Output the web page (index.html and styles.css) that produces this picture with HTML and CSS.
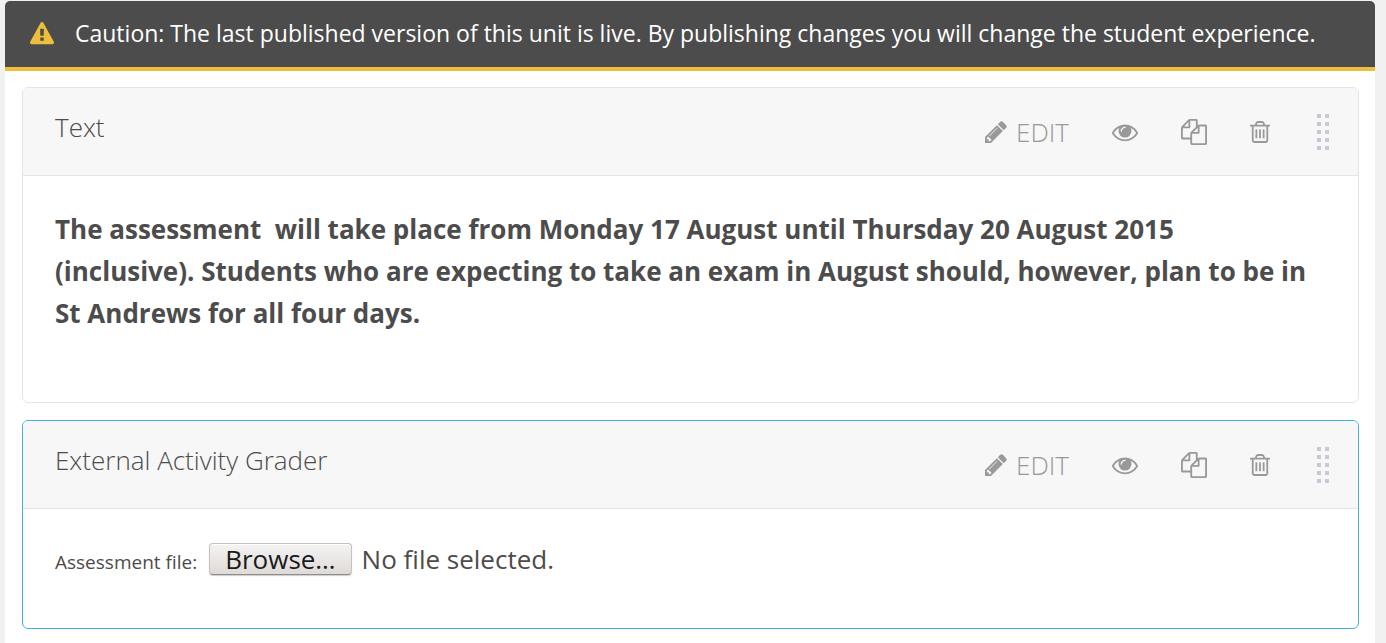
FILE: index.html
```html
<!DOCTYPE html>
<html lang="en">
<head>
<meta charset="utf-8">
<meta name="viewport" content="width=device-width, initial-scale=1">
<title>Unit editor</title>
<link rel="stylesheet" href="styles.css">
</head>
<body>
<svg class="sprite" aria-hidden="true">
  <symbol id="warning" viewBox="0 0 1792 1792"><path d="M1024 1375v-190q0-14-9.5-23.5t-22.5-9.5h-192q-13 0-22.5 9.5t-9.5 23.5v190q0 14 9.5 23.5t22.5 9.5h192q13 0 22.5-9.5t9.5-23.5zm-2-374l18-459q0-12-10-19-13-11-24-11h-220q-11 0-24 11-10 7-10 21l17 457q0 10 10 16.5t24 6.500h185q14 0 23.500-6.500t10.500-16.500zm-14-934l768 1408q35 63-2 126-17 29-46.500 46t-63.500 17h-1536q-34 0-63.500-17t-46.500-46q-37-63-2-126l768-1408q17-31 47-49t65-18 65 18 47 49z"/></symbol>
  <symbol id="pencil" viewBox="128 128 1536 1536"><path d="M491 1536l91-91-235-235-91 91v107h128v128h107zm523-928q0-22-22-22-10 0-17 7l-542 542q-7 7-7 17 0 22 22 22 10 0 17-7l542-542q7-7 7-17zm-54-192l416 416-832 832h-416v-416zm683 96q0 53-37 90l-166 166-416-416 166-165q36-38 90-38 53 0 91 38l235 234q37 39 37 91z"/></symbol>
  <symbol id="eye" viewBox="0 0 1792 1792"><path d="M1664 960q-152-236-381-353 61 104 61 225 0 185-131.500 316.500t-316.500 131.500-316.500-131.500-131.500-316.500q0-121 61-225-229 117-381 353 133 205 333.500 326.500t434.500 121.500 434.500-121.500 333.500-326.500zm-720-384q0-20-14-34t-34-14q-125 0-214.500 89.500t-89.500 214.500q0 20 14 34t34 14 34-14 14-34q0-86 61-147t147-61q20 0 34-14t14-34zm848 384q0 34-20 69-140 230-376.500 368.500t-499.500 138.500-499.500-139-376.500-368q-20-35-20-69t20-69q140-229 376.500-368t499.500-139 499.500 139 376.500 368q20 35 20 69z"/></symbol>
  <symbol id="copy" viewBox="0 0 1792 1792"><path d="M1696 384q40 0 68 28t28 68v1216q0 40-28 68t-68 28h-960q-40 0-68-28t-28-68v-288h-544q-40 0-68-28t-28-68v-672q0-40 20-88t48-76l408-408q28-28 76-48t88-20h416q40 0 68 28t28 68v328q68-40 128-40h416zm-544 213l-299 299h299v-299zm-640-384l-299 299h299v-299zm196 647l316-316v-416h-384v416q0 40-28 68t-68 28h-416v640h512v-256q0-40 20-88t48-76zm956 804v-1152h-384v416q0 40-28 68t-68 28h-416v640h896z"/></symbol>
  <symbol id="trash" viewBox="192 0 1408 1792"><path d="M704 736v576q0 14-9 23t-23 9h-64q-14 0-23-9t-9-23v-576q0-14 9-23t23-9h64q14 0 23 9t9 23zm256 0v576q0 14-9 23t-23 9h-64q-14 0-23-9t-9-23v-576q0-14 9-23t23-9h64q14 0 23 9t9 23zm256 0v576q0 14-9 23t-23 9h-64q-14 0-23-9t-9-23v-576q0-14 9-23t23-9h64q14 0 23 9t9 23zm128 724v-948h-896v948q0 22 7 40.500t14.500 27 10.500 8.500h832q3 0 10.500-8.500t14.500-27 7-40.500zm-672-1076h448l-48-117q-7-9-17-11h-317q-10 2-17 11zm928 32v64q0 14-9 23t-23 9h-96v948q0 83-47 143.500t-113 60.500h-832q-66 0-113-58.500t-47-141.500v-952h-96q-14 0-23-9t-9-23v-64q0-14 9-23t23-9h309l70-167q15-37 54-63t79-26h320q40 0 79 26t54 63l70 167h309q14 0 23 9t9 23z"/></symbol>
  <symbol id="grip" viewBox="0 0 12 36"><path d="M0 0h4v4H0zM8 0h4v4H8zM0 8h4v4H0zM8 8h4v4H8zM0 16h4v4H0zM8 16h4v4H8zM0 24h4v4H0zM8 24h4v4H8zM0 32h4v4H0zM8 32h4v4H8z"/></symbol>
</svg>
<main class="unit">
  <div class="banner" role="alert">
    <svg class="banner-icon" aria-hidden="true"><use href="#warning"/></svg>
    <p class="banner-text">Caution: The last published version of this unit is live. By publishing changes you will change the student experience.</p>
  </div>
  <div class="components">
    <section class="card">
      <header class="card-header">
        <h2 class="card-title">Text</h2>
        <div class="actions">
          <button type="button" class="action action-edit"><svg class="icon-pencil" aria-hidden="true"><use href="#pencil"/></svg><span>EDIT</span></button>
          <button type="button" class="action" aria-label="Set visibility"><svg class="icon" aria-hidden="true"><use href="#eye"/></svg></button>
          <button type="button" class="action" aria-label="Duplicate"><svg class="icon" aria-hidden="true"><use href="#copy"/></svg></button>
          <button type="button" class="action" aria-label="Delete"><svg class="icon-trash" aria-hidden="true"><use href="#trash"/></svg></button>
          <button type="button" class="action action-drag" aria-label="Drag to reorder"><svg class="icon-grip" aria-hidden="true"><use href="#grip"/></svg></button>
        </div>
      </header>
      <div class="card-body">
        <p class="notice">The assessment&nbsp; will take place from Monday 17 August until Thursday 20 August 2015 (inclusive). Students who are expecting to take an exam in August should, however, plan to be in St Andrews for all four days.</p>
      </div>
    </section>
    <section class="card card-active">
      <header class="card-header">
        <h2 class="card-title">External Activity Grader</h2>
        <div class="actions">
          <button type="button" class="action action-edit"><svg class="icon-pencil" aria-hidden="true"><use href="#pencil"/></svg><span>EDIT</span></button>
          <button type="button" class="action" aria-label="Set visibility"><svg class="icon" aria-hidden="true"><use href="#eye"/></svg></button>
          <button type="button" class="action" aria-label="Duplicate"><svg class="icon" aria-hidden="true"><use href="#copy"/></svg></button>
          <button type="button" class="action" aria-label="Delete"><svg class="icon-trash" aria-hidden="true"><use href="#trash"/></svg></button>
          <button type="button" class="action action-drag" aria-label="Drag to reorder"><svg class="icon-grip" aria-hidden="true"><use href="#grip"/></svg></button>
        </div>
      </header>
      <div class="card-body">
        <div class="upload">
          <label class="upload-label" for="assessment">Assessment file:</label>
          <div class="picker">
            <span class="picker-button">Browse…</span>
            <span class="picker-status">No file selected.</span>
            <input class="picker-input" type="file" id="assessment">
          </div>
        </div>
      </div>
    </section>
  </div>
</main>
</body>
</html>
```
FILE: styles.css
```css
* {
  box-sizing: border-box;
}

body {
  margin: 0;
  padding: 1px 11px 0 5px;
  background: #f1f1f1;
  color: #4c4c4c;
  font-family: "Open Sans", "Noto Sans", sans-serif;
  font-size: 26px;
}

.sprite {
  position: absolute;
  width: 0;
  height: 0;
}

svg {
  display: block;
  fill: currentColor;
}

.unit {
  min-height: calc(100vh - 1px);
  background: #fff;
  border-radius: 5px 5px 0 0;
}

.banner {
  display: flex;
  align-items: center;
  gap: 21px;
  padding: 16px 25px 17px;
  background: #4c4c4c;
  border-bottom: 4px solid #edbd3c;
  border-radius: 5px 5px 0 0;
  color: #fff;
}

.banner-icon {
  flex: none;
  width: 24px;
  height: 24px;
  color: #edbd3c;
}

.banner-text {
  margin: 0;
  font-size: 23px;
  line-height: 33px;
}

.components {
  display: grid;
  gap: 17px;
  padding: 16px 16px 14px 17px;
}

.card {
  overflow: hidden;
  border: 1px solid #e5e5e5;
  border-radius: 6px;
}

.card-active {
  border-color: #3fb1e0;
}

.card-header {
  display: flex;
  justify-content: space-between;
  gap: 32px;
  padding: 21px 29px 20px 32px;
  background: #f7f7f7;
  border-bottom: 1px solid #e5e5e5;
}

.card-title {
  margin: 0;
  font-size: 26px;
  font-weight: 300;
  line-height: 36px;
}

.actions {
  display: flex;
  align-items: center;
  gap: 43px;
  height: 46px;
}

.action {
  display: flex;
  align-items: center;
  padding: 0;
  border: 0;
  background: none;
  color: #999;
  font: inherit;
  font-weight: 300;
  line-height: 36px;
  cursor: pointer;
}

.action-edit {
  gap: 9px;
}

.action-drag {
  margin-left: 4px;
  color: #c7cad6;
  cursor: move;
}

.icon {
  width: 26px;
  height: 26px;
}

.icon-trash {
  width: 20px;
  height: 26px;
}

.icon-pencil {
  width: 22px;
  height: 22px;
}

.icon-grip {
  width: 12px;
  height: 36px;
}

.card-body {
  padding: 32px 48px 32px 32px;
}

.notice {
  margin: 0 0 36px;
  font-weight: 700;
  line-height: 42px;
}

.upload {
  display: flex;
  align-items: baseline;
  gap: 12px;
  margin-bottom: 19px;
}

.upload-label {
  font-size: 19px;
}

.picker {
  position: relative;
  display: flex;
  align-items: baseline;
  gap: 10px;
  line-height: 36px;
}

.picker-button {
  padding: 0 15px;
  border: 1px solid #c4c1bf;
  border-bottom-color: #8f8c8a;
  border-radius: 4px;
  background: linear-gradient(#f5f4f3, #dedad7);
  box-shadow: inset 0 1px #fff, 0 1px 1px #ccc;
  color: #1a1a1a;
  line-height: 30px;
}

.picker-input {
  position: absolute;
  inset: 0;
  width: 100%;
  opacity: 0;
  cursor: pointer;
}
```
